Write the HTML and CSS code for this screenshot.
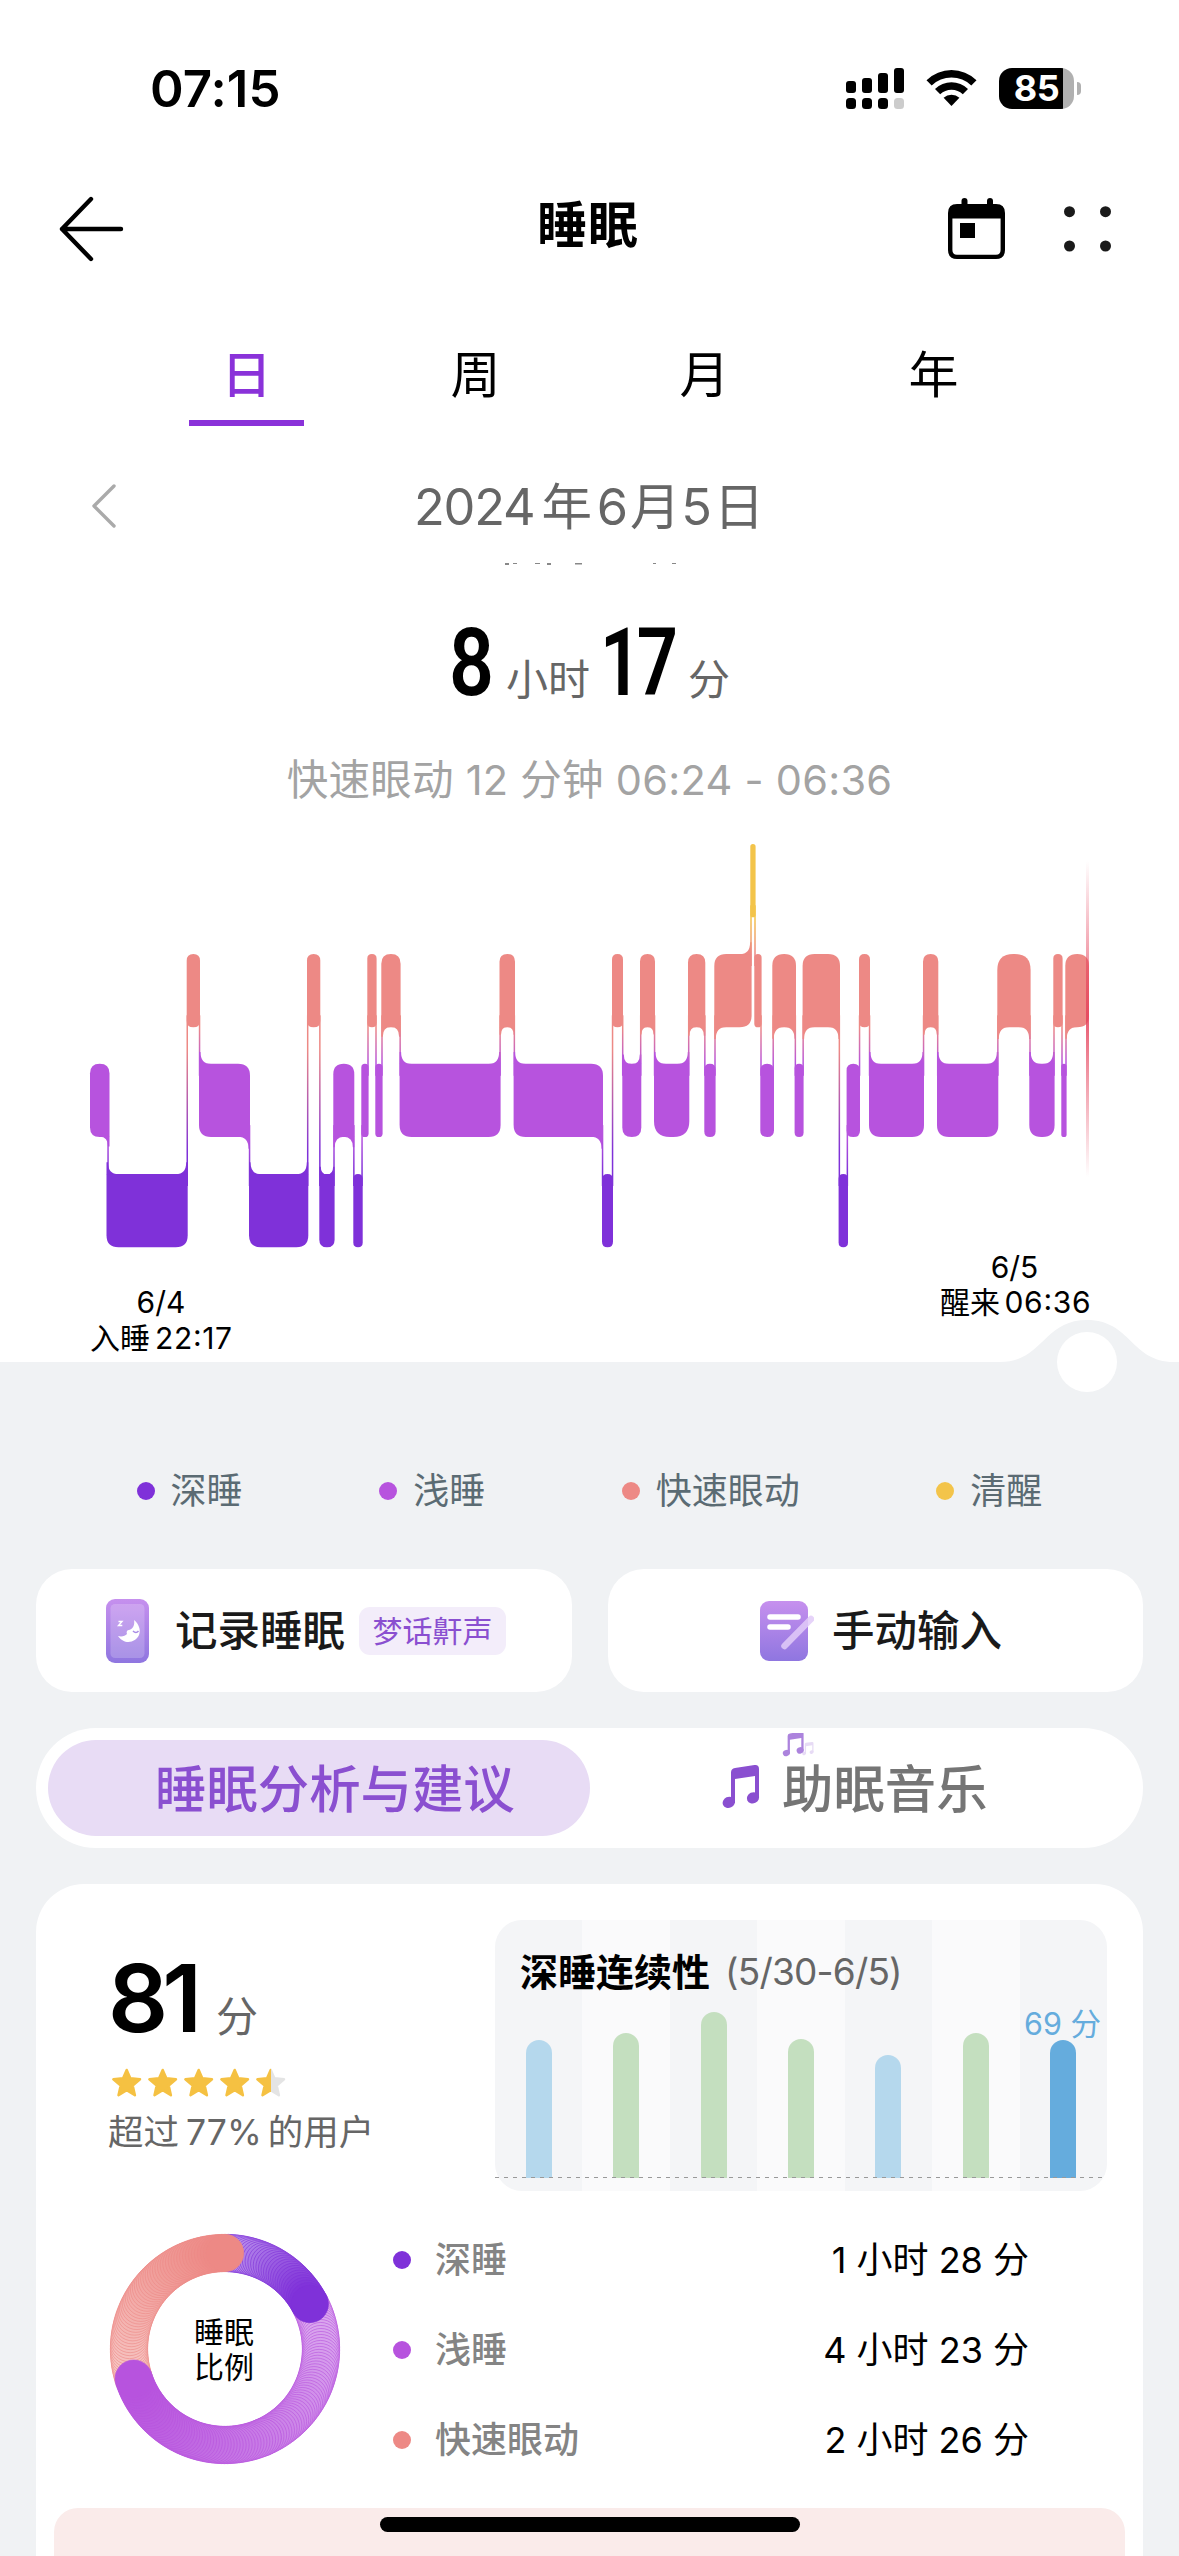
FILE: index.html
```html
<!DOCTYPE html>
<html lang="zh-CN">
<head>
<meta charset="utf-8">
<title>睡眠</title>
<link rel="stylesheet" href="styles.css">
</head>
<body>
<div class="screen">
  <header class="status">
    <span class="status-time">07:15</span>
    <div class="status-icons">
      <svg class="signal" width="58" height="41" viewBox="0 0 58 41">
        <rect x="0" y="13" width="10" height="12" rx="3"/><rect x="16" y="10" width="10" height="15" rx="3"/><rect x="32" y="5" width="10" height="20" rx="3"/><rect x="48" y="0" width="10" height="25" rx="3"/>
        <rect x="0" y="30" width="10" height="11" rx="3.5"/><rect x="16" y="30" width="10" height="11" rx="3.5"/><rect x="32" y="30" width="10" height="11" rx="3.5"/><rect x="48" y="30" width="10" height="11" rx="3.5" fill="#ccc"/>
      </svg>
      <svg class="wifi" width="51" height="38" viewBox="0 0 51 38">
        <path d="M0.5 11.2A36 36 0 0 1 50.5 11.2L45.3 16.4A28.6 28.6 0 0 0 5.7 16.4Z"/>
        <path d="M9 20A23.8 23.8 0 0 1 42 20L36.8 25.2A16.4 16.4 0 0 0 14.2 25.2Z"/>
        <path d="M17.6 28.8A11.6 11.6 0 0 1 33.4 28.8L25.5 37Z"/>
      </svg>
      <div class="battery"><span class="battery-level">85</span></div>
    </div>
  </header>

  <nav class="nav">
    <svg width="66" height="66" viewBox="0 0 66 66" fill="none" stroke="#000" stroke-width="4.4" stroke-linecap="round" stroke-linejoin="round"><path d="M33 3L4 33L33 63M4 33H63"/></svg>
    <h1 class="nav-title">睡眠</h1>
    <div class="nav-actions">
      <svg width="57" height="62" viewBox="0 0 57 62">
        <path fill-rule="evenodd" d="M9 6H48Q57 6 57 15V52Q57 61 48 61H9Q0 61 0 52V15Q0 6 9 6ZM4.4 20.5V52Q4.4 56.8 9 56.8H48Q52.6 56.8 52.6 52V20.5Z"/>
        <rect x="13.5" y="0" width="6" height="12" rx="3"/><rect x="39" y="0" width="6" height="12" rx="3"/><rect x="12" y="25" width="15" height="15"/>
      </svg>
      <svg width="47" height="46" viewBox="0 0 47 46" fill="#1a1a1a"><circle cx="5.5" cy="5.7" r="5.5"/><circle cx="41.5" cy="5.7" r="5.5"/><circle cx="5.5" cy="40" r="5.5"/><circle cx="41.5" cy="40" r="5.5"/></svg>
    </div>
  </nav>

  <div class="tabs">
    <div class="tab tab-active">日</div>
    <div class="tab">周</div>
    <div class="tab">月</div>
    <div class="tab">年</div>
  </div>

  <div class="date-row">
    <svg width="24" height="44" viewBox="0 0 24 44" fill="none" stroke="#aaa" stroke-width="3.4" stroke-linecap="round" stroke-linejoin="round"><path d="M22 2L2 22L22 42"/></svg>
    <div class="date">2024<b>年</b>6<i>月</i>5<i>日</i></div>
    <svg class="scrolled-edge" width="180" height="3" viewBox="0 0 180 3" fill="#888"><path d="M1 0h4v2h-4zM9 0h4v1h-4zM31 0h5v1h-5zM43 0h4v2h-4zM71 0h7v1.5h-7zM149 0h3v1h-3zM168 0h4v1h-4z"/></svg>
  </div>

  <div class="total"><span class="num num-h">8</span><span class="unit">小时</span><span class="num num-m">17</span><span class="unit">分</span></div>
  <div class="stage-detail">快速眼动 12 分钟 06:24 - 06:36</div>

  <svg class="sleep-chart" id="sleep-chart" width="1179" height="572" viewBox="0 820 1179 572">
    <defs>
      <linearGradient id="cursor" x1="0" y1="0" x2="0" y2="1">
        <stop offset="0" stop-color="#e5405a" stop-opacity="0"/><stop offset=".5" stop-color="#e5405a" stop-opacity=".85"/><stop offset="1" stop-color="#e5405a" stop-opacity="0"/>
      </linearGradient>
    </defs>
    <path fill="#f0f2f4" d="M0 1362H1000C1043 1362 1043 1320 1087 1320S1131 1362 1174 1362H1179V1392H0Z"/>
    <circle cx="1087" cy="1362" r="30" fill="#fff"/>
    <g id="stages"></g>
    <rect x="1086" y="861" width="3" height="316" fill="url(#cursor)"/>
    <g class="chart-label">
      <text x="161" y="1313" text-anchor="middle">6/4</text>
      <text x="90" y="1349">入睡</text><text x="155" y="1349" textLength="77">22:17</text>
      <text x="1014.5" y="1277.5" text-anchor="middle">6/5</text>
      <text x="940" y="1313">醒来</text><text x="1004.5" y="1313" textLength="86">06:36</text>
    </g>
  </svg>

  <main class="panel">
    <div class="legend">
      <span class="key"><i class="dot deep"></i>深睡</span>
      <span class="key"><i class="dot light"></i>浅睡</span>
      <span class="key"><i class="dot rem"></i>快速眼动</span>
      <span class="key"><i class="dot awake"></i>清醒</span>
    </div>

    <div class="actions">
      <div class="action">
        <svg class="ic-phone" width="43" height="66" viewBox="0 0 43 66">
          <defs><linearGradient id="pg" x1="0" y1="0" x2="0" y2="1"><stop offset="0" stop-color="#c690ee"/><stop offset="1" stop-color="#8f76e0"/></linearGradient></defs>
          <rect y="1" width="43" height="64" rx="9" fill="url(#pg)"/><rect x="4.5" y="6" width="34" height="54" rx="4.5" fill="#fff" opacity=".2"/>
          <path d="M28 22C33 26 35 32 33 37C30 44 19 48 12 38C16 39 19 38 21 36C20 34 21 32 23 32C27 31 29 27 28 22Z" fill="#fff"/>
          <path d="M27 33Q30 36 32.5 33" stroke="#a98be6" stroke-width="1.5" fill="none"/>
          <path d="M12.5 23.5H16L12.5 27.5H16.3" stroke="#fff" stroke-width="1.4" fill="none"/>
        </svg>
        <span class="action-text">记录睡眠</span><span class="badge">梦话鼾声</span>
      </div>
      <div class="action action-edit">
        <svg class="ic-note" width="54" height="62" viewBox="0 0 54 62">
          <rect y="1" width="48" height="60" rx="9" fill="url(#pg)"/>
          <path d="M10 17H38M10 27H28" stroke="#fff" stroke-width="5.5" stroke-linecap="round"/>
          <path d="M24.5 46L51 19" stroke="#e2cbf8" stroke-opacity=".85" stroke-width="6.5" stroke-linecap="round"/>
        </svg>
        <span class="action-text">手动输入</span>
      </div>
    </div>

    <div class="segmented">
      <div class="segment segment-active"><span>睡眠分析与建议</span></div>
      <div class="segment segment-music">
        <svg class="ic-music" width="92" height="86" viewBox="0 0 92 86" fill="#8a4fd0">
          <g id="note"><path d="M9 39.5Q9 35.5 13 34.9L32.5 32Q37 31.5 37 36V65H33V43L13 46V70H9Z"/><ellipse cx="6.8" cy="69.3" rx="6.3" ry="5.5" transform="rotate(-25 6.8 69.3)"/><ellipse cx="31" cy="64.8" rx="6.3" ry="5.5" transform="rotate(-25 31 64.8)"/></g>
          <use href="#note" transform="translate(60.5 -19.5) scale(.57)" opacity=".7"/>
          <use href="#note" transform="translate(80 -1) scale(.31)" opacity=".2"/>
        </svg>
        <span>助眠音乐</span>
      </div>
    </div>

    <section class="report">
      <div class="report-top">
        <div class="score">
          <div class="score-line"><span class="score-num">81</span><span class="score-unit">分</span></div>
          <svg class="stars" width="176" height="30" viewBox="0 0 176 30">
            <defs>
              <path id="star" stroke-width="2.5" stroke-linejoin="round" d="M14.7 2L18.3 10.3L28 11.2L20.7 17.5L22.9 27.2L14.7 22.2L6.5 27.2L8.7 17.5L1.4 11.2L11.1 10.3Z"/>
              <linearGradient id="half"><stop offset=".52" stop-color="#f5c142"/><stop offset=".52" stop-color="#e4e4e4"/></linearGradient>
            </defs>
            <g fill="#f5c142" stroke="#f5c142"><use href="#star"/><use href="#star" x="36"/><use href="#star" x="72"/><use href="#star" x="108"/></g>
            <use href="#star" x="144" fill="url(#half)" stroke="url(#half)"/>
          </svg>
          <div class="rank">超过<b>77%</b>的用户</div>
        </div>
        <div class="trend">
          <div class="trend-title"><strong>深睡连续性</strong><span>(5/30-6/5)</span></div>
          <div class="trend-bars">
            <div class="day"><i class="bar blue" style="height:138px"></i></div>
            <div class="day"><i class="bar green" style="height:145px"></i></div>
            <div class="day"><i class="bar green" style="height:166px"></i></div>
            <div class="day"><i class="bar green" style="height:139px"></i></div>
            <div class="day"><i class="bar blue" style="height:123px"></i></div>
            <div class="day"><i class="bar green" style="height:145px"></i></div>
            <div class="day"><i class="bar today" style="height:138px"></i></div>
          </div>
          <div class="trend-value">69 分</div>
          <div class="trend-axis"></div>
        </div>
      </div>
      <div class="report-mid">
        <div class="donut">
          <svg id="donut" width="232" height="232" viewBox="-116 -116 232 232"></svg>
          <div class="donut-text">睡眠<br>比例</div>
        </div>
        <div class="stats">
          <div class="stat"><i class="dot deep"></i><span class="stat-name">深睡</span><span class="stat-value">1 小时 28 分</span></div>
          <div class="stat"><i class="dot light"></i><span class="stat-name">浅睡</span><span class="stat-value">4 小时 23 分</span></div>
          <div class="stat"><i class="dot rem"></i><span class="stat-name">快速眼动</span><span class="stat-value">2 小时 26 分</span></div>
        </div>
      </div>
      <div class="advice"></div>
    </section>
  </main>
  <div class="home-bar"></div>
</div>
<script src="charts.js"></script>
</body>
</html>
```
FILE: styles.css
```css
* { box-sizing: border-box; }
html, body { margin: 0; }
body { background: #fff; color: #000; font-family: Inter, "Noto Sans CJK SC", sans-serif; }
i, b { font-style: normal; font-weight: inherit; }
svg { display: block; flex: none; }
.screen { position: relative; width: 1179px; height: 2556px; overflow: hidden; display: flex; flex-direction: column; }
.screen > * { flex: none; }

.status { height: 176px; padding: 0 105px 0 150px; display: flex; align-items: center; justify-content: space-between; }
.status-time { font-size: 51px; font-weight: 600; letter-spacing: .1px; }
.status-icons { display: flex; align-items: center; }
.wifi { margin-left: 22px; }
.battery { position: relative; margin-left: 22px; width: 75px; height: 41px; border-radius: 13px; background: linear-gradient(90deg, #000 64px, #b0b0b0 64px); }
.battery::after { content: ""; position: absolute; left: 78px; top: 14px; width: 4px; height: 13px; border-radius: 0 4px 4px 0; background: #b0b0b0; }
.battery-level { display: block; width: 75px; text-align: center; font-size: 36px; font-weight: 700; line-height: 41px; color: #fff; letter-spacing: -.5px; }

.nav { height: 106px; padding: 0 68px 0 58px; display: grid; grid-template-columns: 200px 1fr 210px; align-items: center; }
.nav-title { margin: 0; font-size: 50px; line-height: 60px; font-weight: 700; text-align: center; padding: 0 0 8px 17px; letter-spacing: 1px; }
.nav-actions { display: flex; justify-content: flex-end; align-items: center; gap: 59px; }

.tabs { height: 144px; padding: 0 132px 0; display: grid; grid-template-columns: repeat(4, 229px); }
.tab { display: flex; flex-direction: column; align-items: center; justify-content: flex-end; padding-bottom: 21px; font-size: 50px; line-height: 60px; font-weight: 400; }
.tab-active { color: #8a32d9; font-weight: 500; padding-bottom: 0; }
.tab-active::after { content: ""; width: 115px; height: 6px; margin-top: 15px; background: #8a32d9; }

.date-row { position: relative; height: 160px; padding: 0 92px; display: grid; grid-template-columns: 24px 1fr 24px; align-items: center; color: #666; }
.date { text-align: center; font-size: 50.5px; font-weight: 400; line-height: 60px; padding-top: 2px; white-space: nowrap; letter-spacing: -1.2px; }
.date b { margin: 0 6px 0 7px; }
.date i { margin: 0 2px 0 3px; }
.scrolled-edge { position: absolute; left: 504px; top: 137px; }

.total { height: 142px; padding-top: 12px; display: flex; justify-content: center; align-items: baseline; line-height: 130px; }
.num { display: block; font: 600 95px/130px Roboto, sans-serif; transform-origin: 0 50%; transform: scaleX(.83); }
.num-h { width: 57px; }
.num-m { width: 88px; transform: scaleX(.76); margin-left: 10px; letter-spacing: -6px; }
.unit { font-size: 42px; color: #666; }
.stage-detail { height: 92px; padding-top: 22px; text-align: center; font-size: 41.5px; line-height: 60px; color: #a3a3a3; letter-spacing: .27px; }

.sleep-chart { position: relative; }
.chart-label { font-size: 30px; }

.panel { flex: 1; background: #f0f2f4; padding: 0 36px; display: flex; flex-direction: column; }
.legend { margin: 0 -36px; height: 177px; padding-top: 66px; display: flex; justify-content: space-evenly; align-items: flex-start; }
.key { display: flex; align-items: center; gap: 16px; font-size: 36px; line-height: 66px; color: #5b6b73; }
.dot { display: block; width: 18px; height: 18px; border-radius: 50%; flex: none; }
.deep { background: #7f31d9; }
.light { background: #b753de; }
.rem { background: #ed8985; }
.awake { background: #f3c44a; }

.actions { height: 123px; display: grid; grid-template-columns: 536px 535px; gap: 36px; }
.action { background: #fff; border-radius: 36px; padding-left: 70px; display: flex; align-items: center; }
.action-edit { padding-left: 152px; }
.action-text { margin-left: 26px; font-size: 42.5px; font-weight: 500; color: #1a1a1a; line-height: 60px; }
.action-edit .action-text { margin-left: 18px; }
.badge { margin-left: 14px; height: 48px; width: 147px; border-radius: 11px; background: #f3edfa; color: #8a4fd0; font-size: 30px; line-height: 48px; text-align: center; }

.segmented { margin-top: 36px; height: 120px; padding: 12px; border-radius: 60px; background: #fff; display: grid; grid-template-columns: 542px 1fr; }
.segment { display: flex; align-items: center; font-size: 51.4px; font-weight: 500; color: #757575; white-space: nowrap; }
.segment span { padding-bottom: 5px; }
.segment-active { padding-left: 107px; border-radius: 48px; background: #e8dcf5; color: #8a4fd0; }
.ic-music { margin: -24px 0 0 132px; }
.segment-music span { margin-left: -32px; }

.report { margin-top: 36px; flex: 1; border-radius: 48px 48px 0 0; background: #fff; padding: 36px 18px 0; }
.report-top { display: flex; justify-content: space-between; padding: 0 18px 0 54px; height: 313px; }
.score-line { margin-top: 20px; height: 116px; display: flex; align-items: baseline; line-height: 116px; }
.score-num { font-size: 94px; font-weight: 600; letter-spacing: -6px; }
.score-unit { margin-left: 20px; font-size: 42px; color: #666; }
.stars { margin: 12px 0 0 4px; }
.rank { font-size: 35.5px; line-height: 50px; margin-top: 10px; color: #666; }
.rank b { margin: 0 6px 0 7px; }
.trend { position: relative; width: 612px; height: 271px; }
.trend-title { position: absolute; left: 25px; top: 24px; display: flex; align-items: center; gap: 15px; line-height: 56px; font-size: 38px; white-space: nowrap; }
.trend-title strong { font-weight: 700; }
.trend-title span { color: #666; font-size: 37px; letter-spacing: -.8px; }
.trend-bars { height: 271px; display: grid; grid-template-columns: repeat(7, 1fr); border-radius: 27px; background: #f4f5f7; overflow: hidden; }
.day { display: flex; align-items: flex-end; justify-content: center; padding-bottom: 13px; }
.day:nth-child(even) { background: #fafafb; }
.bar { display: block; width: 26px; border-radius: 13px 13px 0 0; }
.blue { background: #b5d8ed; }
.green { background: #c4dfbf; }
.today { background: #65acdd; }
.trend-value { position: absolute; right: 6px; top: 80px; font-size: 30.5px; font-weight: 400; line-height: 48px; color: #65acdd; }
.trend-axis { position: absolute; left: 0; right: 0; top: 257px; height: 1px; background: repeating-linear-gradient(90deg, #999 0 4px, transparent 4px 9px); }

.report-mid { height: 275px; padding: 0 96px 0 55px; display: flex; }
.donut { position: relative; width: 232px; height: 232px; }
.donut-text { position: absolute; left: 0; right: 2px; top: 82px; text-align: center; font-size: 30px; line-height: 35px; }
.stats { flex: 1; margin-left: 52px; margin-top: -18px; }
.stat { height: 90px; display: flex; align-items: center; font-size: 36px; line-height: 50px; }
.stat-name { margin-left: 24px; font-weight: 500; color: #848484; }
.stat-value { margin-left: auto; }
.advice { height: 60px; border-radius: 24px 24px 0 0; background: #faebea; }
.home-bar { position: absolute; left: 380px; top: 2517px; width: 420px; height: 15px; border-radius: 8px; background: #000; }
```
FILE: charts.js
```js
const COLORS = { A: '#f3c44a', R: '#ed8985', L: '#b753de', D: '#7f31d9' };
const TOP = { A: 844, R: 954, L: 1063.8, D: 1174 };
const HEIGHT = 73.3;

// Sleep stages in order: [stage, start x, end x]
const stages = [
  ['L', 90, 109.5], ['D', 106.5, 187.7], ['R', 186.7, 200], ['L', 199, 250], ['D', 249, 308.3],
  ['R', 307, 320.3], ['D', 319.3, 334.6], ['L', 333.3, 354.3], ['D', 353.3, 362.7], ['L', 361.3, 368.6],
  ['R', 367.3, 376.6], ['L', 375.3, 382.6], ['R', 381.3, 400.6], ['L', 399.6, 500.6], ['R', 499.5, 515],
  ['L', 513.6, 603], ['D', 602, 613], ['R', 612, 623], ['L', 622.3, 641.3], ['R', 640, 655],
  ['L', 654, 689.3], ['R', 688, 705.3], ['L', 704.3, 715.6], ['R', 714.3, 751.6], ['A', 750.3, 755.6],
  ['R', 754.3, 761.6], ['L', 760.3, 774], ['R', 772.3, 796], ['L', 794.6, 803.6], ['R', 802.6, 840],
  ['D', 838.6, 848], ['L', 846.6, 860], ['R', 859, 870], ['L', 869, 924], ['R', 923, 938.3],
  ['L', 937, 998.3], ['R', 997.3, 1030.6], ['L', 1029.3, 1054.6], ['R', 1053.3, 1062.6],
  ['L', 1061.3, 1066.6], ['R', 1065.3, 1089]
];

function flare(x, y, dx, dy, r) {
  return `<path d="M${x} ${y + dy * r}V${y}H${x - dx * r}Q${x - dx * 1.5} ${y} ${x - dx * 1.5} ${y + dy * r}Z"/>`;
}

let svg = '';
let defs = '';
stages.forEach(([s, x0, x1], i) => {
  const top = TOP[s], bottom = top + HEIGHT, w = x1 - x0;
  const wide = w >= 15;
  const r = Math.min(w / 2, w > 30 && w < 36 ? 16 : 12);
  const prev = stages[i - 1], next = stages[i + 1];
  const side = n => (n ? (TOP[n[0]] < top ? -1 : 1) : 0);
  const a = side(prev), b = side(next);
  // Corners that join a connector stay square so the flare continues them
  const k = { tl: r, tr: r, br: r, bl: r };
  if (wide) {
    if (a < 0) k.tl = 0; if (a > 0) k.bl = 0;
    if (b < 0) k.tr = 0; if (b > 0) k.br = 0;
  }
  svg += `<g fill="${COLORS[s]}"><path d="M${x0 + k.tl} ${top}H${x1 - k.tr}Q${x1} ${top} ${x1} ${top + k.tr}V${bottom - k.br}Q${x1} ${bottom} ${x1 - k.br} ${bottom}H${x0 + k.bl}Q${x0} ${bottom} ${x0} ${bottom - k.bl}V${top + k.tl}Q${x0} ${top} ${x0 + k.tl} ${top}Z"/>`;
  if (wide && a) svg += flare(x0, a < 0 ? top + .3 : bottom - .3, -1, a, Math.min(12, w / 2));
  if (wide && b) svg += flare(x1, b < 0 ? top + .3 : bottom - .3, 1, b, Math.min(12, w / 2));
  svg += '</g>';
  if (next) {
    const nt = TOP[next[0]];
    const upper = Math.min(top, nt) + HEIGHT - 12, lower = Math.max(top, nt) + 12;
    const down = nt > top;
    defs += `<linearGradient id="c${i}" x1="0" y1="0" x2="0" y2="1"><stop offset=".2" stop-color="${COLORS[down ? s : next[0]]}"/><stop offset=".8" stop-color="${COLORS[down ? next[0] : s]}"/></linearGradient>`;
    svg += `<rect x="${(x1 + next[1]) / 2 - .7}" y="${upper}" width="1.5" height="${lower - upper}" fill="url(#c${i})"/>`;
  }
});
document.getElementById('stages').innerHTML = `<defs>${defs}</defs>${svg}`;

// Proportion ring: overlapping discs travel along each arc and darken to the full colour
function mix(a, b, t) {
  return 'rgb(' + a.map((v, i) => Math.round(v + (b[i] - v) * t)).join(',') + ')';
}
function arc(from, to, pale, full, start = 0, end = 1) {
  let out = '';
  const n = Math.round((to - from) / 1.8);
  for (let i = Math.round(n * start); i <= n * end; i++) {
    const t = i / n, angle = (from + (to - from) * t) * Math.PI / 180;
    out += `<circle cx="${96 * Math.sin(angle)}" cy="${-96 * Math.cos(angle)}" r="18.7" fill="${mix(pale, full, t)}" stroke="${mix(full, full, 1)}" stroke-opacity=".6" stroke-width="1"/>`;
  }
  return out;
}
const deep = [127, 49, 217], light = [183, 83, 222], rem = [237, 137, 133];
const lightPale = [222, 176, 240];
document.getElementById('donut').innerHTML =
  arc(62, 252, lightPale, light, 0, .5) +
  arc(2, 62, [198, 164, 240], deep) +
  arc(252, 360, [248, 206, 204], rem) +
  arc(62, 252, lightPale, light, .5, 1);
```
